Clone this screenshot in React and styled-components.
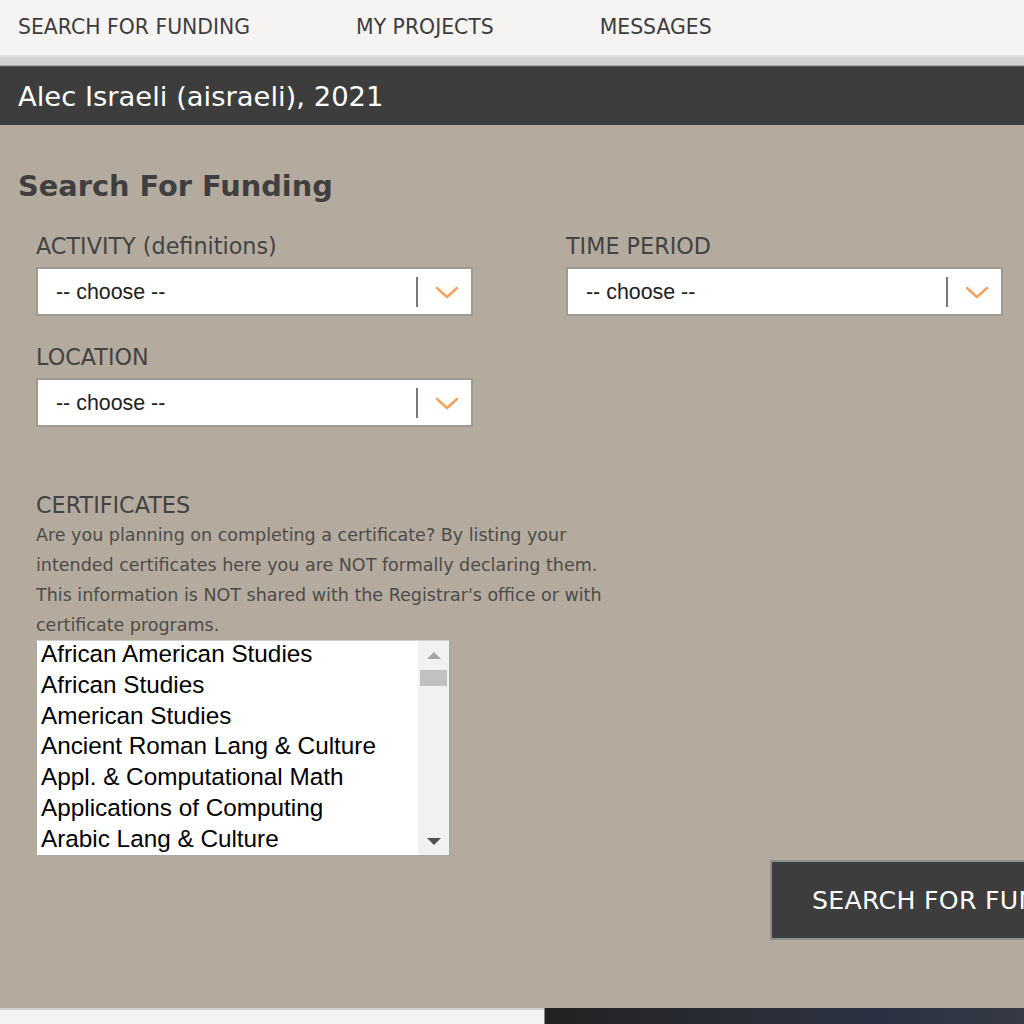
import React from 'react';
import styled, { createGlobalStyle } from 'styled-components';

const GlobalStyle = createGlobalStyle`
  html, body {
    margin: 0;
    padding: 0;
    overflow: hidden;
    background: #b4aa9e;
  }
  body {
    font-family: "DejaVu Sans", Verdana, sans-serif;
  }
`;

const Page = styled.div`
  width: 1024px;
  overflow: hidden;
`;

// top navigation
const TopNav = styled.nav`
  height: 55px;
  background: #f5f4f2;
  display: flex;
  align-items: center;
  padding-left: 18px;
  gap: 106px;
`;

const NavItem = styled.a`
  color: #3d3d3d;
  font-size: 20.4px;
  text-decoration: none;
  text-transform: uppercase;
  white-space: nowrap;
  margin-top: -1px;
`;

const Band = styled.div`
  height: 11px;
  background: linear-gradient(#e2e3e2, #d2d4d3 30%, #d2d4d3 85%, #9a9c9b);
  border-bottom: 1px solid #5a5a5a;
`;

const UserBar = styled.div`
  height: 58px;
  background: #3d3d3d;
  color: #ffffff;
  display: flex;
  align-items: center;
  padding-left: 18px;
  font-size: 27.4px;
`;

const Main = styled.main`
  background: #b4aa9e;
  padding: 44px 0 68px 18px;
`;

const Heading = styled.h1`
  margin: 0 0 30px;
  font-size: 28.8px;
  line-height: 34px;
  font-weight: bold;
  color: #3f3f3f;
`;

const FormGrid = styled.div`
  display: grid;
  grid-template-columns: 437px 437px;
  column-gap: 93px;
  row-gap: 28px;
  padding-left: 18px;
`;

const Field = styled.div`
  display: flex;
  flex-direction: column;
  gap: 8px;
`;

const Label = styled.label`
  font-size: 22.3px;
  line-height: 26px;
  color: #434343;
  white-space: nowrap;
`;

const SelectBox = styled.div`
  height: 45px;
  background: #ffffff;
  border: 2px solid #9d9993;
  display: flex;
  align-items: center;
  padding-left: 18px;
  font-family: "Liberation Sans", Arial, sans-serif;
  font-size: 21.4px;
  color: #222222;
`;

const SelectText = styled.span`
  flex: 1;
  padding-top: 2px;
`;

const Divider = styled.span`
  width: 2px;
  height: 30px;
  background: #7a7a7a;
  margin-right: 17px;
`;

const Chevron = styled.svg`
  width: 24px;
  height: 14px;
  margin-right: 12px;
  margin-top: 2px;
`;

const CertSection = styled.section`
  padding-left: 18px;
  margin-top: 65px;
`;

const Help = styled.p`
  margin: 2px 0 0;
  width: 575px;
  font-size: 17.5px;
  line-height: 30px;
  color: #4d4b48;
`;

const ListBox = styled.div`
  width: 412px;
  height: 214px;
  background: #ffffff;
  border: 1px solid #a8a8a8;
  border-top-color: #cfcfcf;
  display: flex;
  overflow: hidden;
`;

const Options = styled.ul`
  flex: 1;
  margin: -2px 0 0;
  padding: 0 0 0 4px;
  list-style: none;
  overflow: hidden;
`;

const Option = styled.li`
  font-family: "Liberation Sans", Arial, sans-serif;
  font-size: 24.3px;
  line-height: 30.8px;
  color: #000000;
  white-space: nowrap;
`;

const Scrollbar = styled.div`
  width: 31px;
  background: #f1f1f1;
  display: flex;
  flex-direction: column;
  align-items: center;
  padding: 11px 0 10px;
  box-sizing: border-box;
`;

const Arrow = styled.span`
  width: 0;
  height: 0;
  border-left: 7px solid transparent;
  border-right: 7px solid transparent;
  ${({ $up }) =>
    $up
      ? 'border-bottom: 7px solid #a3a3a3;'
      : 'border-top: 7px solid #505050; margin-top: auto;'}
`;

const Thumb = styled.div`
  width: 27px;
  height: 16px;
  background: #c1c1c1;
  margin-top: 11px;
`;

const ButtonRow = styled.div`
  margin-top: 4px;
  padding-left: 752px;
`;

const SearchButton = styled.button`
  height: 80px;
  padding: 0 40px;
  background: #3d3d3d;
  border: 2px solid #8e8e8e;
  color: #ffffff;
  font-family: "DejaVu Sans", Verdana, sans-serif;
  font-size: 25.2px;
  letter-spacing: 0.3px;
  text-transform: uppercase;
  white-space: nowrap;
  cursor: pointer;
`;

const Footer = styled.footer`
  display: flex;
  height: 30px;
`;

const FooterLight = styled.div`
  width: 544px;
  background: #f3f3f3;
  border-top: 2px solid #cfcfcf;
`;

const FooterDark = styled.div`
  flex: 1;
  background: linear-gradient(90deg, #222222, #2a2e38 45%, #2b3142 70%, #353a45);
  border-left: 1px solid #888;
`;

const certificates = [
  'African American Studies',
  'African Studies',
  'American Studies',
  'Ancient Roman Lang & Culture',
  'Appl. & Computational Math',
  'Applications of Computing',
  'Arabic Lang & Culture',
];

const Select = ({ label }) => (
  <Field>
    <Label>{label}</Label>
    <SelectBox>
      <SelectText>-- choose --</SelectText>
      <Divider />
      <Chevron viewBox="0 0 24 14">
        <polyline
          points="2,2 12,11 22,2"
          fill="none"
          stroke="#f5a15c"
          strokeWidth="2.4"
          strokeLinecap="round"
          strokeLinejoin="round"
        />
      </Chevron>
    </SelectBox>
  </Field>
);

const App = () => {
  return (
    <>
      <GlobalStyle />
      <Page>
        <TopNav>
          <NavItem href="#">Search for Funding</NavItem>
          <NavItem href="#">My Projects</NavItem>
          <NavItem href="#">Messages</NavItem>
        </TopNav>
        <Band />
        <UserBar>Alec Israeli (aisraeli), 2021</UserBar>

        <Main>
          <Heading>Search For Funding</Heading>
          <FormGrid>
            <Select label="ACTIVITY (definitions)" />
            <Select label="TIME PERIOD" />
            <Select label="LOCATION" />
          </FormGrid>

          <CertSection>
            <Label>CERTIFICATES</Label>
            <Help>
              Are you planning on completing a certificate? By listing your
              intended certificates here you are NOT formally declaring them.
              This information is NOT shared with the Registrar's office or
              with certificate programs.
            </Help>
            <ListBox>
              <Options>
                {certificates.map((c) => (
                  <Option key={c}>{c}</Option>
                ))}
              </Options>
              <Scrollbar>
                <Arrow $up />
                <Thumb />
                <Arrow />
              </Scrollbar>
            </ListBox>
          </CertSection>

          <ButtonRow>
            <SearchButton>Search for Funding</SearchButton>
          </ButtonRow>
        </Main>

        <Footer>
          <FooterLight />
          <FooterDark />
        </Footer>
      </Page>
    </>
  );
};

export default App;
